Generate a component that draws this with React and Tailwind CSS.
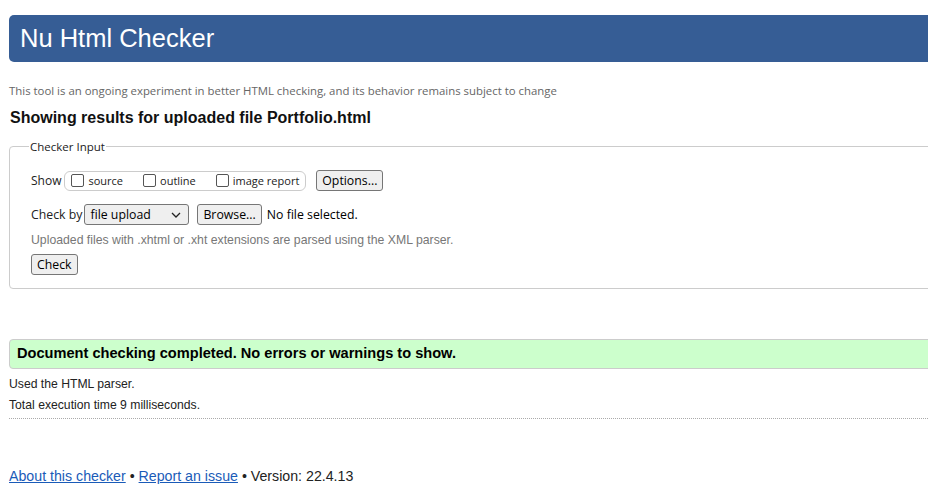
export default function App() {
  const seg = { fontFamily: '"Open Sans", "Noto Sans", sans-serif' };
  return (
    <div className="w-[928px] h-[490px] overflow-hidden bg-white text-[#222]" style={{ fontFamily: '"Liberation Sans", Arial, sans-serif' }}>
      <div className="w-[1200px] pl-[9px] pt-[15px]">
        <div className="h-[47px] bg-[#365d95] rounded-l-[5px] flex items-center pl-[11px]">
          <h1 className="text-white text-[25.5px] leading-none">Nu Html Checker</h1>
        </div>
        <p className="mt-[21px] text-[11.4px] text-[#666] leading-[16px]" style={seg}>
          This tool is an ongoing experiment in better HTML checking, and its behavior remains subject to change
        </p>
        <h2 className="mt-[9px] ml-[1px] text-[16px] font-bold leading-[20px] text-[#111]">
          Showing results for uploaded file Portfolio.html
        </h2>
        <fieldset className="mt-[10px] border border-[#ccc] rounded-[4px] pl-[21px] pb-[12px] min-w-0">
          <legend className="px-[1px] ml-[-2px] text-[11.5px] text-[#222]" style={seg}>Checker Input</legend>
          <div className="flex items-center mt-[15px] text-[11px]" style={seg}>
            <span className="text-[12px] mr-[3px]">Show</span>
            <div className="flex items-center h-[20px] border border-[#ccc] rounded-[6px] pl-[6px] pr-[6px]">
              <label className="flex items-center"><span className="w-[13px] h-[13px] border border-[#555] rounded-[2px] mr-[4px]"></span>source</label>
              <label className="flex items-center ml-[20px]"><span className="w-[13px] h-[13px] border border-[#555] rounded-[2px] mr-[4px]"></span>outline</label>
              <label className="flex items-center ml-[20px]"><span className="w-[13px] h-[13px] border border-[#555] rounded-[2px] mr-[4px]"></span>image report</label>
            </div>
            <button className="ml-[10px] h-[21px] px-[5px] border border-[#767676] rounded-[3px] bg-[#efefef] text-[12.3px] text-black leading-none">Options...</button>
          </div>
          <div className="flex items-center mt-[13px] text-[12.3px]" style={seg}>
            <span className="mr-[2px]">Check by</span>
            <div className="h-[21px] w-[105px] border border-[#767676] rounded-[3px] bg-[#efefef] flex items-center justify-between pl-[5px] pr-[7px] text-black">
              <span>file upload</span>
              <svg width="10" height="6" viewBox="0 0 10 6"><path d="M1 1l4 4 4-4" fill="none" stroke="#222" strokeWidth="1.3" /></svg>
            </div>
            <button className="ml-[8px] h-[21px] px-[5px] border border-[#767676] rounded-[3px] bg-[#efefef] text-black leading-none">Browse...</button>
            <span className="ml-[5px] text-black">No file selected.</span>
          </div>
          <p className="mt-[7px] text-[12.25px] text-[#777] leading-[16px]">Uploaded files with .xhtml or .xht extensions are parsed using the XML parser.</p>
          <button className="mt-[6px] h-[21px] px-[5px] border border-[#767676] rounded-[3px] bg-[#efefef] text-[12.3px] text-black leading-none" style={seg}>Check</button>
        </fieldset>
        <div className="mt-[50px] h-[30px] bg-[#ccffcc] border border-[#ccc] rounded-l-[4px] flex items-center pl-[7px]">
          <p className="text-[14.6px] font-bold text-black">Document checking completed. No errors or warnings to show.</p>
        </div>
        <p className="mt-[7px] text-[12.2px] leading-[16px]">Used the HTML parser.</p>
        <p className="mt-[5px] text-[12.2px] leading-[16px]">Total execution time 9 milliseconds.</p>
        <div className="mt-[5px] border-t border-dotted border-[#aaa]"></div>
        <p className="mt-[47px] text-[14.2px] text-[#222]">
          <a href="#" className="text-[#1a5bb8] underline">About this checker</a> • <a href="#" className="text-[#1a5bb8] underline">Report an issue</a> • Version: 22.4.13
        </p>
      </div>
    </div>
  );
}
